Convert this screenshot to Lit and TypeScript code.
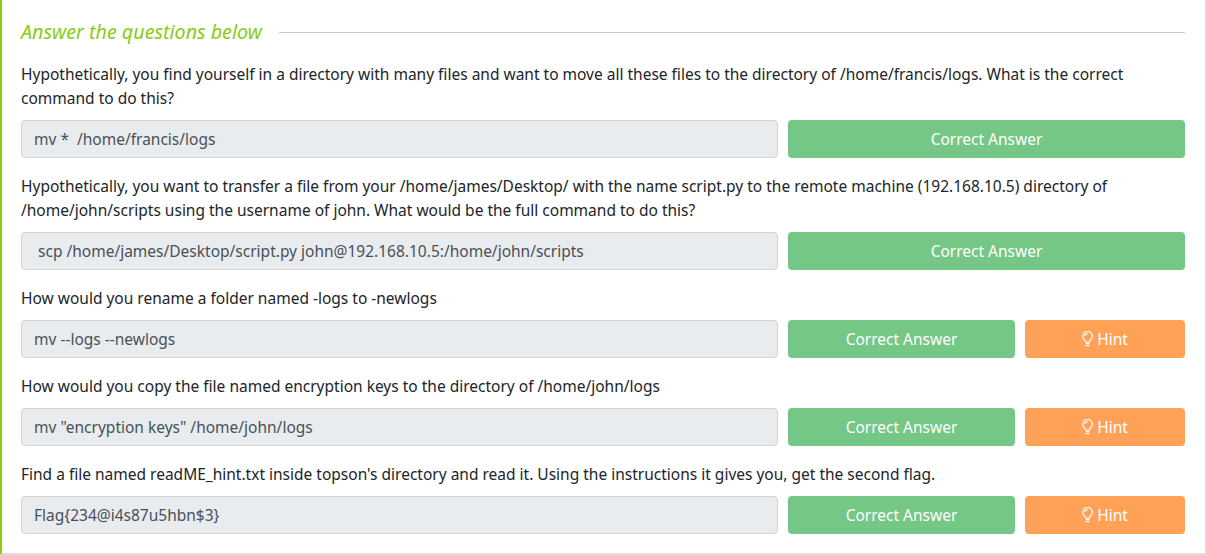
import { LitElement, html, css, nothing } from "lit";
import { customElement } from "lit/decorators.js";

const rows = [
  { q: ["Hypothetically, you find yourself in a directory with many files and want to move all these files to the directory of /home/francis/logs. What is the correct", "command to do this?"], a: "mv *  /home/francis/logs", hint: false },
  { q: ["Hypothetically, you want to transfer a file from your /home/james/Desktop/ with the name script.py to the remote machine (192.168.10.5) directory of", "/home/john/scripts using the username of john. What would be the full command to do this?"], a: " scp /home/james/Desktop/script.py john@192.168.10.5:/home/john/scripts", hint: false },
  { q: ["How would you rename a folder named -logs to -newlogs"], a: "mv --logs --newlogs", hint: true },
  { q: ["How would you copy the file named encryption keys to the directory of /home/john/logs"], a: 'mv "encryption keys" /home/john/logs', hint: true },
  { q: ["Find a file named readME_hint.txt inside topson's directory and read it. Using the instructions it gives you, get the second flag."], a: "Flag{234@i4s87u5hbn$3}", hint: true },
];

@customElement("app-root")
export class AppRoot extends LitElement {
  static styles = css`
    :host { display: block; font-family: "Noto Sans", "Open Sans", sans-serif; font-size: 15.5px; color: #212529; }
    .card { box-sizing: border-box; height: 555px; background: #fff; border-left: 2px solid #88cc14; border-right: 1px solid #dcdcdc; border-bottom: 2px solid #dedede; padding: 20px 20px 0 19px; }
    .head { display: flex; align-items: center; gap: 17px; height: 24px; margin-bottom: 18px; }
    .title { font-size: 19.7px; font-style: italic; color: #88cc14; line-height: 24px; }
    .rule { flex: 1; height: 1px; background: #c8c8c8; }
    .q { line-height: 24px; margin-bottom: 10px; white-space: nowrap; }
    .row { display: flex; gap: 10px; height: 38px; margin-bottom: 16px; }
    .input { box-sizing: border-box; width: 757px; flex: none; background: #e9ecef; border: 1px solid #ced4da; border-radius: 4px; padding: 0 12px; line-height: 36px; color: #495057; white-space: pre; }
    .btn { display: flex; align-items: center; justify-content: center; border-radius: 4px; color: #fff; }
    .ok { flex: 1; background: #75c785; }
    .hint { flex: none; width: 160px; background: #ffa257; gap: 4px; }
    svg { flex: none; width: 11px; height: 16px; fill: none; stroke: #fff; stroke-width: 1.2; }
  `;

  render() {
    return html`<div class="card">
      <div class="head"><div class="title">Answer the questions below</div><div class="rule"></div></div>
      ${rows.map(r => html`
        <div class="q">${r.q.map(l => html`<div>${l}</div>`)}</div>
        <div class="row">
          <div class="input">${r.a}</div>
          <div class="btn ok">Correct Answer</div>
          ${r.hint ? html`<div class="btn hint">
            <svg viewBox="0 0 11 16"><path d="M3.5 11C3.4 9 .7 7.8 .7 5.2A4.8 4.8 0 0 1 10.3 5.2C10.3 7.8 7.6 9 7.5 11Z"/><path d="M3.6 12.7H7.4M3.6 14.6H7.4M3 5A2.6 2.6 0 0 1 5.4 2.6"/></svg>
            <span>Hint</span></div>` : nothing}
        </div>`)}
    </div>`;
  }
}
